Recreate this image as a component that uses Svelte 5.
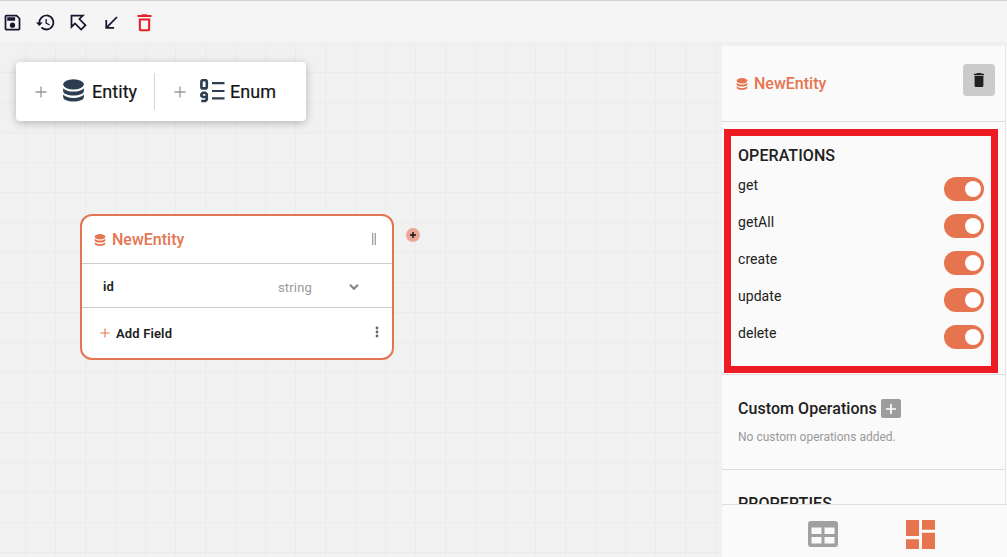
<script>
  let operations = $state([
    { name: 'get', on: true },
    { name: 'getAll', on: true },
    { name: 'create', on: true },
    { name: 'update', on: true },
    { name: 'delete', on: true },
  ]);
</script>

{#snippet database(size)}
  <svg class="db" width={size} height={size} viewBox="0 0 22 24">
    <ellipse cx="11" cy="5.600" rx="10.800" ry="5.400" />
    <path d="M.2 9.600c2 2.600 6 3.500 10.800 3.500s8.800-.9 10.800-3.500v2.800c0 2.900-4.900 4.700-10.800 4.700S.2 15.300.2 12.400Z" />
    <path d="M.2 16.300c2 2.600 6 3.500 10.800 3.500s8.800-.9 10.800-3.500v2.500c0 2.900-4.900 4.700-10.800 4.700S.2 21.700.2 18.800Z" />
  </svg>
{/snippet}

<div class="app">
  <header class="toolbar">
    <svg viewBox="0 0 24 24"><path d="M17 3H5a2 2 0 0 0-2 2v14a2 2 0 0 0 2 2h14a2 2 0 0 0 2-2V7l-4-4Zm2 16H5V5h11.170L19 7.830V19Zm-7-7a3 3 0 1 0 0 6 3 3 0 0 0 0-6ZM6 6h9v4H6V6Z" /></svg>
    <svg viewBox="0 0 24 24"><path d="M13.500 8H12v5l4.280 2.540.72-1.210-3.500-2.080V8M13 3a9 9 0 0 0-9 9H1l3.960 4.030L9 12H6a7 7 0 1 1 2.060 4.940l-1.420 1.420A9 9 0 1 0 13 3" /></svg>
    <svg viewBox="0 0 24 24"><path class="outline" d="M4 4h13l-4 4 7 7-5 5-7-7-4 4Z" /></svg>
    <svg viewBox="0 0 24 24"><path d="M19 6.410 17.590 5 7 15.590V9H5v10h10v-2H8.410L19 6.410Z" /></svg>
    <svg class="danger" viewBox="0 0 24 24"><path d="M5.500 20c0 1.100.9 2 2 2h9c1.100 0 2-.9 2-2V7.500h-13V20ZM7.900 9.800h8.200v10H7.900v-10Zm7.600-6.300-1-1h-5l-1 1H4v2.200h16V3.500h-4.500Z" /></svg>
  </header>

  <div class="workspace">
    <main class="canvas">
      <div class="palette">
        <button class="entity">
          <svg class="plus" viewBox="0 0 12 12"><path d="M6 .5v11M.5 6h11" /></svg>
          {@render database(23)}
          <span>Entity</span>
        </button>
        <i class="divider"></i>
        <button class="enum">
          <svg class="plus" viewBox="0 0 12 12"><path d="M6 .5v11M.5 6h11" /></svg>
          <svg class="numbers" width="25" height="24" viewBox="0 0 25 24">
            <rect x="1.400" y="1.200" width="5.400" height="8.200" rx="1.500" />
            <path d="M6.800 18H2.900l-1.500-1.200v-1.500l1.500-1.500h2.400l1.500 1.500v5.200l-1.500 1.500H1.200" />
            <path class="lines" d="M12 4.200h12.500M12 12h12.500M12 19.400h12.500" />
          </svg>
          <span>Enum</span>
        </button>
      </div>

      <section class="node">
        <div class="row title">
          {@render database(12)}
          <span>NewEntity</span>
          <i class="grip"></i>
        </div>
        <div class="row field">
          <b>id</b>
          <span>string</span>
          <svg class="chevron" viewBox="0 0 10 6"><path d="m1 .8 4 4 4-4" /></svg>
        </div>
        <div class="row add">
          <svg class="plus" viewBox="0 0 12 12"><path d="M6 .5v11M.5 6h11" /></svg>
          <b>Add Field</b>
          <svg class="more" viewBox="0 0 4 12"><circle cx="2" cy="2" r="1.400" /><circle cx="2" cy="6" r="1.400" /><circle cx="2" cy="10" r="1.400" /></svg>
        </div>
      </section>
      <button class="connector" aria-label="Add relation">
        <svg viewBox="0 0 14 14"><path d="M7 4v6M4 7h6" /></svg>
      </button>
    </main>

    <aside class="panel">
      <div class="scroll">
        <div class="heading">
          {@render database(12)}
          <span>NewEntity</span>
          <button class="remove" aria-label="Delete entity">
            <svg viewBox="0 0 10 14"><path d="M3 0h4l.6.800H10v1.400H0V.8h2.400ZM.6 3h8.800v9.500c0 .8-.6 1.500-1.400 1.500H2c-.8 0-1.400-.7-1.400-1.500Z" /></svg>
          </button>
        </div>
        <div class="operations">
          <h2>OPERATIONS</h2>
          {#each operations as op}
            <div class="operation">
              <span>{op.name}</span>
              <button class="switch" class:on={op.on} aria-label={op.name} onclick={() => (op.on = !op.on)}><i></i></button>
            </div>
          {/each}
        </div>
        <div class="custom">
          <h2>Custom Operations
            <button class="new" aria-label="Add custom operation"><svg viewBox="0 0 12 12"><path d="M6 1v10M1 6h10" /></svg></button>
          </h2>
          <p>No custom operations added.</p>
        </div>
        <div class="properties"><h2>PROPERTIES</h2></div>
        <div class="highlight"></div>
      </div>
      <nav class="views">
        <svg class="table" viewBox="0 0 30 26"><path fill-rule="evenodd" d="M3 0h24a3 3 0 0 1 3 3v20a3 3 0 0 1-3 3H3a3 3 0 0 1-3-3V3a3 3 0 0 1 3-3Zm.5 6.500v6.500h10V6.500Zm13 0v6.500h10V6.500ZM3.500 16v6.500h10V16Zm13 0v6.500h10V16Z" /></svg>
        <svg class="board" viewBox="0 0 30 30"><path d="M0 0h13.500v16.500H0ZM16.500 0H30v10H16.500ZM16.500 13.300H30V30H16.500ZM0 20h13.500v10H0Z" /></svg>
      </nav>
    </aside>
  </div>
</div>

<style>
  :global(body) { margin: 0; }
  * { box-sizing: border-box; }
  .app { width: 1007px; height: 557px; overflow: hidden; display: flex; flex-direction: column; background: #f1f1f1; font-family: Roboto, sans-serif; color: #212121; }
  svg { display: block; flex: none; fill: currentColor; }
  button { border: 0; padding: 0; margin: 0; font: inherit; color: inherit; background: none; }
  h2, p { margin: 0; }
  .toolbar { height: 42px; flex: none; display: flex; align-items: center; gap: 12px; padding: 1px 2px 0; border-top: 1px solid #d5d2d2; background: #f5f5f5; color: #16162e; }
  .toolbar svg { width: 21px; height: 21px; }
  .outline { fill: none; stroke: currentColor; stroke-width: 2; }
  .toolbar .danger { color: #e6212a; }
  .workspace { flex: 1; min-height: 0; display: flex; padding-top: 4px; background: #efefef; }
  .canvas {
    position: relative; flex: 1;
    background: linear-gradient(90deg, #ebebeb 1px, transparent 1px) 25px 0 / 30px 30px, linear-gradient(#ebebeb 1px, transparent 1px) 0 26px / 30px 30px, #f1f1f1;
  }
  .palette { position: absolute; left: 16px; top: 16px; width: 290px; height: 59px; display: flex; align-items: center; background: #fff; border-radius: 4px; box-shadow: 0 2px 8px rgba(0, 0, 0, .25); }
  .palette button { display: flex; align-items: center; font-size: 18px; color: #161616; }
  .palette .entity { width: 138px; padding-left: 19px; }
  .palette .enum { padding-left: 19px; }
  .plus { width: 12px; height: 12px; fill: none; stroke: #999; stroke-width: 1.300; }
  .palette .db { margin: -2px 7px 0 15px; color: #2c3e50; }
  .palette span { -webkit-text-stroke: .2px currentColor; letter-spacing: .05px; }
  .divider { width: 1px; height: 37px; background: #d5d5d5; }
  .numbers { margin: -1px 5px 0 14px; fill: none; stroke: #2c3e50; stroke-width: 2.600; }
  .lines { stroke-width: 2.200; }
  .node { position: absolute; left: 80px; top: 168px; width: 314px; height: 146px; background: #fff; border: 2px solid #e57450; border-radius: 12px; }
  .row { display: flex; align-items: center; }
  .title { height: 48px; padding: 0 16px 0 12px; gap: 6px; border-bottom: 1px solid #ccc; color: #e57450; font-size: 16px; font-weight: 500; }
  .grip { width: 4px; height: 12px; margin: -2px 0 0 auto; border: solid #a5a5a5; border-width: 0 1.500px; background: #ddd; }
  .field { height: 44px; border-bottom: 1px solid #ccc; padding: 2px 33px 0 21px; font-size: 13px; color: #999; }
  .field b { width: 175px; font-weight: 600; color: #212121; }
  .field span { letter-spacing: .15px; padding-top: 1px; }
  .chevron { width: 10px; height: 6px; margin-left: auto; fill: none; stroke: #888; stroke-width: 2.200; }
  .add { height: 50px; padding: 1px 13px 0 18px; font-size: 13px; }
  .add .plus { width: 10px; height: 10px; margin: -2px 6px 0 0; stroke: #e57450; }
  .add b { font-weight: 600; letter-spacing: .15px; }
  .more { width: 4px; height: 12px; margin: -3px 0 0 auto; color: #666; }
  .connector { position: absolute; left: 406px; top: 182px; width: 14px; height: 14px; border-radius: 50%; background: #eba696; color: #111; }
  .connector path { stroke: currentColor; stroke-width: 1.400; }
  .panel { width: 285px; display: flex; flex-direction: column; background: #fafafa; }
  .scroll { position: relative; height: 458px; overflow: hidden; margin-right: 1px; border-right: 1px solid #e6e6e6; }
  .heading { height: 76px; display: flex; align-items: center; gap: 6px; padding: 0 10px 0 14px; color: #e57450; font-size: 16px; font-weight: 500; border-bottom: 1px solid #ddd; }
  .remove { width: 32px; height: 32px; margin: -8px 0 0 auto; display: grid; place-items: center; border-radius: 4px; background: #cbcbcb; color: #212121; }
  .remove svg { width: 10px; height: 14px; }
  .operations { height: 253px; padding: 24px 21px 0 16px; border-bottom: 1px solid #ddd; }
  h2 { font-size: 16px; line-height: 20px; font-weight: 500; letter-spacing: .08px; }
  .operation { height: 37px; display: flex; justify-content: space-between; padding-top: 10px; font-size: 14px; line-height: 20px; }
  .operation span { margin-top: -2px; letter-spacing: .05px; }
  .operations h2 + .operation { margin-top: 1px; }
  .switch { width: 40px; height: 24px; display: flex; align-items: center; padding: 0 3px; border-radius: 12px; background: #aaa; }
  .switch.on { justify-content: flex-end; background: #e6754f; }
  .switch i { width: 16px; height: 16px; border-radius: 50%; background: #fff; }
  .custom { height: 95px; padding: 24px 16px 0; border-bottom: 1px solid #ddd; }
  .custom h2 { display: flex; align-items: center; gap: 4px; letter-spacing: .05px; }
  .new { width: 20px; height: 19px; margin-top: -1px; display: grid; place-items: center; border-radius: 2px; background: #9d9d9d; }
  .new svg { width: 12px; height: 12px; stroke: #fff; stroke-width: 1.700; }
  .custom p { margin-top: 9px; font-size: 12px; line-height: 18px; color: #999; }
  .properties { padding: 24px 16px; }
  .highlight { position: absolute; left: 2px; top: 83px; width: 274px; height: 244px; border: 7px solid #ed1c24; pointer-events: none; }
  .views { flex: 1; display: flex; align-items: center; gap: 68px; padding: 6px 0 0 86px; border-top: 1px solid #ddd; }
  .table { width: 30px; height: 26px; color: #a0a0a0; }
  .board { width: 29px; height: 29px; color: #e6754f; }
</style>
